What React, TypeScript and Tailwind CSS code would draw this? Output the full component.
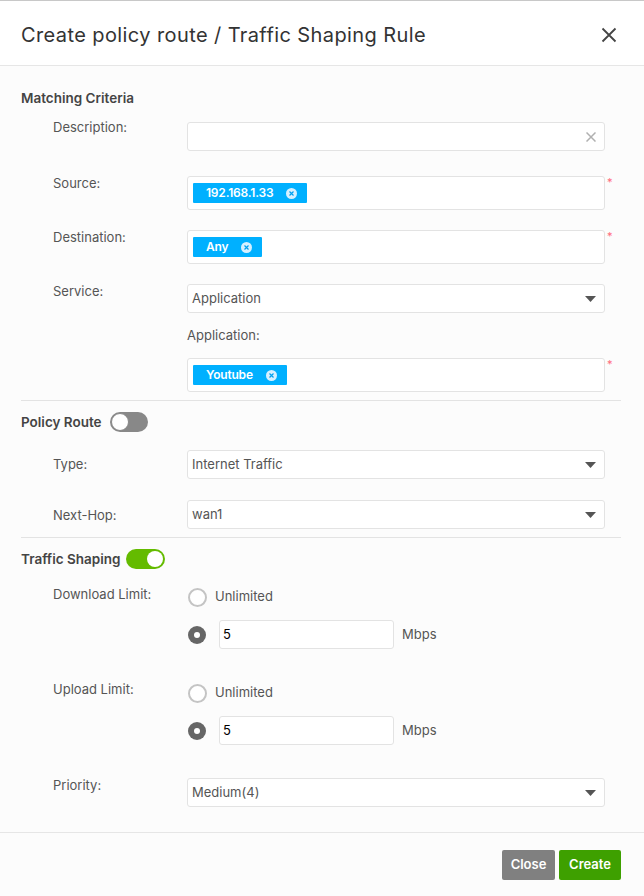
import React from "react";

function Caret() {
  return (
    <svg width="11" height="6" viewBox="0 0 11 6" className="absolute right-[8px] top-1/2 -translate-y-1/2">
      <path d="M0 0h11L5.5 6z" fill="#555" />
    </svg>
  );
}

function Select({ value }: { value: string }) {
  return (
    <div className="relative h-[29px] w-full rounded-[3px] border border-[#e3e3e3] bg-white pl-[4px] flex items-center text-[13px] text-[#555]">
      {value}
      <Caret />
    </div>
  );
}

function Chip({ text }: { text: string }) {
  return (
    <span className="inline-flex h-[20px] items-center rounded-[1px] bg-[#00b0ff] pl-[13px] pr-[10px] text-[12px] font-semibold text-white tracking-[-0.2px]">
      {text}
      <span className="ml-[13px] flex h-[11px] w-[11px] items-center justify-center rounded-full bg-[#d6f0ff]">
        <svg width="5" height="5" viewBox="0 0 5 5">
          <path d="M0.5 0.5l4 4M4.5 0.5l-4 4" stroke="#00a0f0" strokeWidth="1.2" />
        </svg>
      </span>
    </span>
  );
}

function ChipBox({ text }: { text: string }) {
  return (
    <div className="h-[34px] w-full rounded-[3px] border border-[#e3e3e3] bg-white pl-[5px] flex items-center">
      <Chip text={text} />
    </div>
  );
}

function Row({
  label,
  labelClass = "-mt-[1px]",
  required = false,
  className = "",
  children,
}: {
  label?: string;
  labelClass?: string;
  required?: boolean;
  className?: string;
  children: React.ReactNode;
}) {
  return (
    <div className={`flex items-start ${className}`}>
      <div className={`w-[166px] shrink-0 pl-[32px] text-[13px] leading-[16px] text-[#555] ${labelClass}`}>
        {label}
      </div>
      <div className="flex-1">{children}</div>
      <div className="w-[16px] shrink-0 pl-[2px] pt-[1px] text-[11px] leading-[10px] text-[#ff6b7d]">
        {required ? "*" : ""}
      </div>
    </div>
  );
}

function Toggle({ on }: { on: boolean }) {
  return on ? (
    <span className="flex h-[20px] w-[39px] items-center justify-end rounded-full bg-[#64bb00] pr-[2px]">
      <span className="h-[16px] w-[16px] rounded-full bg-white" />
    </span>
  ) : (
    <span className="flex h-[20px] w-[38px] items-center rounded-full bg-[#888] pl-[1px]">
      <span className="h-[18px] w-[18px] rounded-full border border-[#888] bg-white" />
    </span>
  );
}

function Radio({ checked }: { checked: boolean }) {
  return checked ? (
    <span className="flex h-[18px] w-[18px] items-center justify-center rounded-full bg-[#666]">
      <span className="h-[6px] w-[6px] rounded-full bg-white" />
    </span>
  ) : (
    <span className="h-[19px] w-[19px] rounded-full border-2 border-[#c4c4c4] bg-white" />
  );
}

function Limit({ label, labelClass }: { label: string; labelClass: string }) {
  return (
    <>
      <Row label={label} labelClass={labelClass}>
        <div className="flex h-[20px] items-center pl-[1px]">
          <Radio checked={false} />
          <span className="ml-[8px] text-[13px] text-[#555]">Unlimited</span>
        </div>
      </Row>
      <Row className="mt-[13px]">
        <div className="flex h-[29px] items-center pl-[1px]">
          <Radio checked />
          <div className="ml-[13px] flex h-[29px] w-[175px] items-center rounded-[3px] border border-[#e3e3e3] bg-white pl-[3px] text-[13px] text-black">
            5
          </div>
          <span className="ml-[8px] text-[13px] text-[#555]">Mbps</span>
        </div>
      </Row>
    </>
  );
}

export default function App() {
  return (
    <div
      className="flex h-[896px] w-[644px] flex-col border-t border-[#c8c8c8] bg-[#fcfcfc]"
      style={{ fontFamily: "Inter, 'Noto Sans', sans-serif" }}
    >
      {/* Header */}
      <div className="flex h-[65px] shrink-0 items-center justify-between border-b border-[#e6e6e6] bg-white pl-[21px] pr-[27px] pt-[3px]">
        <h1 className="text-[20px] text-[#333] tracking-[0.4px]">Create policy route / Traffic Shaping Rule</h1>
        <svg width="16" height="16" viewBox="0 0 16 16">
          <path d="M1.5 1.5l13 13M14.5 1.5l-13 13" stroke="#444" strokeWidth="1.8" />
        </svg>
      </div>

      {/* Body */}
      <div className="flex-1 pl-[21px] pr-[23px] pt-[22px]">
        <div className="text-[13.5px] font-semibold leading-[20px] text-[#444]">Matching Criteria</div>

        <Row label="Description:" labelClass="-mt-[3px]" className="mt-[14px]">
          <div className="relative h-[29px] w-full rounded-[3px] border border-[#e3e3e3] bg-white">
            <svg width="10" height="10" viewBox="0 0 10 10" className="absolute right-[8px] top-1/2 -translate-y-1/2">
              <path d="M0.5 0.5l9 9M9.5 0.5l-9 9" stroke="#b0b0b0" strokeWidth="1.5" />
            </svg>
          </div>
        </Row>

        <Row label="Source:" required className="mt-[25px]">
          <ChipBox text="192.168.1.33" />
        </Row>

        <Row label="Destination:" required className="mt-[20px]">
          <ChipBox text="Any" />
        </Row>

        <Row label="Service:" className="mt-[20px]">
          <Select value="Application" />
        </Row>

        <Row className="mt-[12px]">
          <div className="text-[13px] leading-[20px] text-[#555]">Application:</div>
        </Row>

        <Row required className="mt-[13px]">
          <ChipBox text="Youtube" />
        </Row>

        <div className="mt-[8px] h-px bg-[#e3e3e3]" />

        <div className="mt-[11px] flex h-[20px] items-center gap-[8px]">
          <span className="text-[13.5px] font-semibold text-[#444]">Policy Route</span>
          <Toggle on={false} />
        </div>

        <Row label="Type:" labelClass="mt-[6px]" className="mt-[18px]">
          <Select value="Internet Traffic" />
        </Row>

        <Row label="Next-Hop:" labelClass="mt-[7px]" className="mt-[21px]">
          <Select value="wan1" />
        </Row>

        <div className="mt-[8px] h-px bg-[#e3e3e3]" />

        <div className="mt-[11px] flex h-[20px] items-center gap-[6px]">
          <span className="text-[13.5px] font-semibold text-[#444]">Traffic Shaping</span>
          <Toggle on />
        </div>

        <div className="mt-[18px]">
          <Limit label="Download Limit:" labelClass="-mt-[1px]" />
        </div>
        <div className="mt-[34px]">
          <Limit label="Upload Limit:" labelClass="-mt-[2px]" />
        </div>

        <Row label="Priority:" className="mt-[33px]">
          <Select value="Medium(4)" />
        </Row>
      </div>

      {/* Footer */}
      <div className="flex h-[64px] shrink-0 items-start justify-end gap-[4px] border-t border-[#e6e6e6] pr-[23px] pt-[17px]">
        <button className="h-[30px] w-[53px] rounded-[2px] bg-[#808080] text-[13px] font-semibold text-white">
          Close
        </button>
        <button className="h-[30px] w-[62px] rounded-[2px] bg-[#3ea000] text-[13px] font-semibold text-white">
          Create
        </button>
      </div>
    </div>
  );
}
